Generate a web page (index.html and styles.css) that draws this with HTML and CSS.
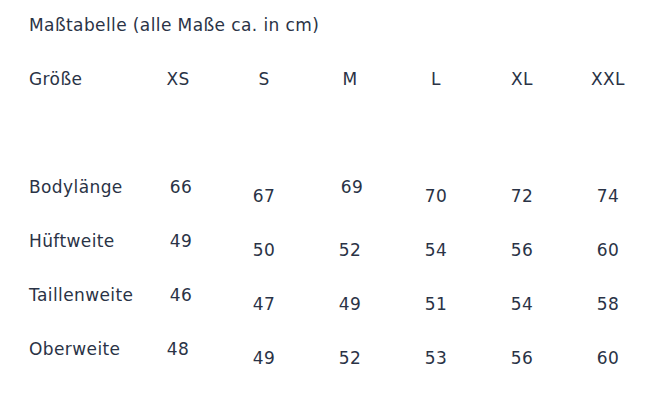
FILE: index.html
```html
<!DOCTYPE html>
<html lang="de">
<head>
<meta charset="utf-8">
<title>Maßtabelle</title>
<link rel="stylesheet" href="styles.css">
</head>
<body>
<div class="page">
  <h1 class="title">Maßtabelle (alle Maße ca. in cm)</h1>
  <div class="table">
    <div class="cell label head">Größe</div>
    <div class="cell head">XS</div>
    <div class="cell head">S</div>
    <div class="cell head">M</div>
    <div class="cell head">L</div>
    <div class="cell head">XL</div>
    <div class="cell head">XXL</div>

    <div class="cell label">Bodylänge</div>
    <div class="cell xs">66</div>
    <div class="cell low">67</div>
    <div class="cell m-hi">69</div>
    <div class="cell low">70</div>
    <div class="cell low">72</div>
    <div class="cell low">74</div>

    <div class="cell label">Hüftweite</div>
    <div class="cell xs">49</div>
    <div class="cell low">50</div>
    <div class="cell low">52</div>
    <div class="cell low">54</div>
    <div class="cell low">56</div>
    <div class="cell low">60</div>

    <div class="cell label">Taillenweite</div>
    <div class="cell xs">46</div>
    <div class="cell low">47</div>
    <div class="cell low">49</div>
    <div class="cell low">51</div>
    <div class="cell low">54</div>
    <div class="cell low">58</div>

    <div class="cell label">Oberweite</div>
    <div class="cell">48</div>
    <div class="cell low">49</div>
    <div class="cell low">52</div>
    <div class="cell low">53</div>
    <div class="cell low">56</div>
    <div class="cell low">60</div>
  </div>
</div>
</body>
</html>
```
FILE: styles.css
```css
html, body {
  margin: 0;
  padding: 0;
  background: #ffffff;
}
.page {
  padding: 15px 0 0 29px;
  font-family: "DejaVu Sans", "Noto Sans", sans-serif;
  font-size: 17px;
  letter-spacing: 0.4px;
  line-height: 20px;
  color: #2a3346;
}
.title {
  margin: 0 0 34px 0;
  font-size: 17px;
  font-weight: normal;
  line-height: 20px;
}
.table {
  display: grid;
  grid-template-columns: 106px repeat(6, 86px);
  grid-template-rows: 108px repeat(4, 54px);
  align-items: start;
}
.cell {
  text-align: center;
}
.cell.label {
  text-align: left;
}
.xs {
  padding-left: 6px;
}
.m-hi {
  padding-left: 4px;
}
.low {
  padding-top: 9px;
}
```
